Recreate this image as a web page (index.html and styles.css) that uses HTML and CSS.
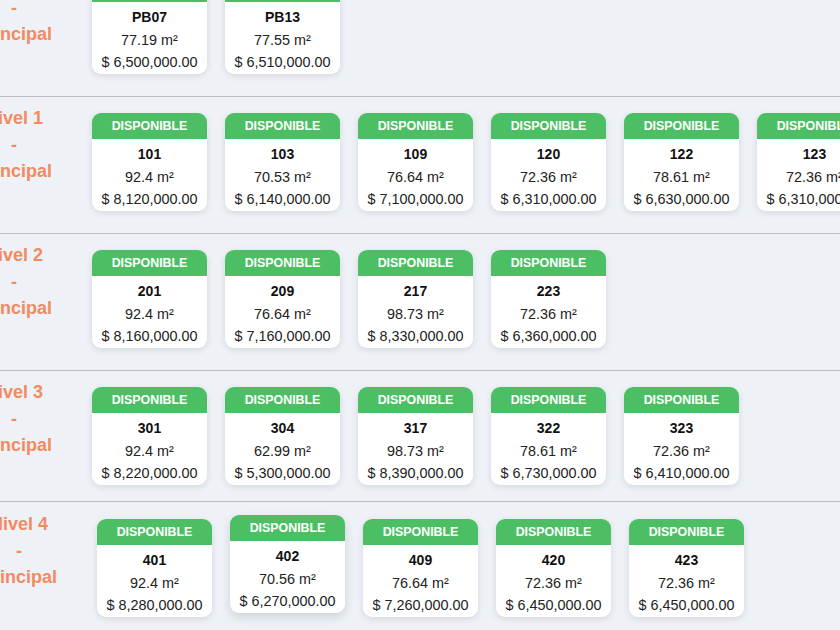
FILE: index.html
```html
<!DOCTYPE html>
<html lang="es">
<head>
<meta charset="utf-8">
<title>Disponibilidad</title>
<link rel="stylesheet" href="styles.css">
</head>
<body>
<div class="page">
  <section class="level">
    <div class="level-label">Nivel PB<br>-<br>Principal</div>
    <div class="units">
      <div class="unit"><div class="unit-status">Disponible</div><div class="unit-body"><div class="unit-num">PB07</div><div>77.19 m²</div><div>$ 6,500,000.00</div></div></div>
      <div class="unit"><div class="unit-status">Disponible</div><div class="unit-body"><div class="unit-num">PB13</div><div>77.55 m²</div><div>$ 6,510,000.00</div></div></div>
    </div>
  </section>
  <section class="level">
    <div class="level-label">Nivel 1<br>-<br>Principal</div>
    <div class="units">
      <div class="unit"><div class="unit-status">Disponible</div><div class="unit-body"><div class="unit-num">101</div><div>92.4 m²</div><div>$ 8,120,000.00</div></div></div>
      <div class="unit"><div class="unit-status">Disponible</div><div class="unit-body"><div class="unit-num">103</div><div>70.53 m²</div><div>$ 6,140,000.00</div></div></div>
      <div class="unit"><div class="unit-status">Disponible</div><div class="unit-body"><div class="unit-num">109</div><div>76.64 m²</div><div>$ 7,100,000.00</div></div></div>
      <div class="unit"><div class="unit-status">Disponible</div><div class="unit-body"><div class="unit-num">120</div><div>72.36 m²</div><div>$ 6,310,000.00</div></div></div>
      <div class="unit"><div class="unit-status">Disponible</div><div class="unit-body"><div class="unit-num">122</div><div>78.61 m²</div><div>$ 6,630,000.00</div></div></div>
      <div class="unit"><div class="unit-status">Disponible</div><div class="unit-body"><div class="unit-num">123</div><div>72.36 m²</div><div>$ 6,310,000.00</div></div></div>
    </div>
  </section>
  <section class="level">
    <div class="level-label">Nivel 2<br>-<br>Principal</div>
    <div class="units">
      <div class="unit"><div class="unit-status">Disponible</div><div class="unit-body"><div class="unit-num">201</div><div>92.4 m²</div><div>$ 8,160,000.00</div></div></div>
      <div class="unit"><div class="unit-status">Disponible</div><div class="unit-body"><div class="unit-num">209</div><div>76.64 m²</div><div>$ 7,160,000.00</div></div></div>
      <div class="unit"><div class="unit-status">Disponible</div><div class="unit-body"><div class="unit-num">217</div><div>98.73 m²</div><div>$ 8,330,000.00</div></div></div>
      <div class="unit"><div class="unit-status">Disponible</div><div class="unit-body"><div class="unit-num">223</div><div>72.36 m²</div><div>$ 6,360,000.00</div></div></div>
    </div>
  </section>
  <section class="level level-tight">
    <div class="level-label">Nivel 3<br>-<br>Principal</div>
    <div class="units">
      <div class="unit"><div class="unit-status">Disponible</div><div class="unit-body"><div class="unit-num">301</div><div>92.4 m²</div><div>$ 8,220,000.00</div></div></div>
      <div class="unit"><div class="unit-status">Disponible</div><div class="unit-body"><div class="unit-num">304</div><div>62.99 m²</div><div>$ 5,300,000.00</div></div></div>
      <div class="unit"><div class="unit-status">Disponible</div><div class="unit-body"><div class="unit-num">317</div><div>98.73 m²</div><div>$ 8,390,000.00</div></div></div>
      <div class="unit"><div class="unit-status">Disponible</div><div class="unit-body"><div class="unit-num">322</div><div>78.61 m²</div><div>$ 6,730,000.00</div></div></div>
      <div class="unit"><div class="unit-status">Disponible</div><div class="unit-body"><div class="unit-num">323</div><div>72.36 m²</div><div>$ 6,410,000.00</div></div></div>
    </div>
  </section>
  <section class="level level-shift">
    <div class="level-label">Nivel 4<br>-<br>Principal</div>
    <div class="units">
      <div class="unit"><div class="unit-status">Disponible</div><div class="unit-body"><div class="unit-num">401</div><div>92.4 m²</div><div>$ 8,280,000.00</div></div></div>
      <div class="unit unit-hover"><div class="unit-status">Disponible</div><div class="unit-body"><div class="unit-num">402</div><div>70.56 m²</div><div>$ 6,270,000.00</div></div></div>
      <div class="unit"><div class="unit-status">Disponible</div><div class="unit-body"><div class="unit-num">409</div><div>76.64 m²</div><div>$ 7,260,000.00</div></div></div>
      <div class="unit"><div class="unit-status">Disponible</div><div class="unit-body"><div class="unit-num">420</div><div>72.36 m²</div><div>$ 6,450,000.00</div></div></div>
      <div class="unit"><div class="unit-status">Disponible</div><div class="unit-body"><div class="unit-num">423</div><div>72.36 m²</div><div>$ 6,450,000.00</div></div></div>
    </div>
  </section>
</div>
</body>
</html>
```

FILE: styles.css
```css
html, body {
  margin: 0;
  padding: 0;
  overflow: hidden;
  background: #eef2f7;
  font-family: "Liberation Sans", Arial, sans-serif;
  color: #222;
}

.page {
  margin: -40px 0 0 -36px;
  width: 1000px;
}

.level {
  display: flex;
  align-items: flex-start;
  padding: 8px 0 22px;
  border-bottom: 1px solid #bcc0c5;
}

.level-tight {
  padding-bottom: 16px;
}

.level-shift {
  padding-top: 9px;
  margin-left: 5px;
}

.level-label {
  width: 100px;
  flex: none;
  text-align: center;
  font-size: 18px;
  font-weight: bold;
  line-height: 26.5px;
  color: #f38a62;
}

.units {
  display: flex;
  gap: 18px;
  margin-left: 28px;
  padding-top: 8px;
}

.unit {
  width: 115px;
  flex: none;
  background: #fff;
  border-radius: 9px;
  overflow: hidden;
  box-shadow: 0 2px 6px rgba(40, 50, 70, 0.13);
  text-align: center;
}

.unit-hover {
  transform: translateY(-4px);
  box-shadow: 0 4px 10px rgba(40, 50, 70, 0.16);
}

.unit-status {
  height: 26px;
  line-height: 26px;
  background: #4cbf64;
  color: #fff;
  font-size: 12.4px;
  font-weight: bold;
  text-transform: uppercase;
}

.unit-body {
  padding: 4px 0 0.5px;
  font-size: 14.4px;
  line-height: 22.5px;
  color: #222;
}

.unit-num {
  font-size: 14px;
  font-weight: bold;
  color: #111;
}
```
